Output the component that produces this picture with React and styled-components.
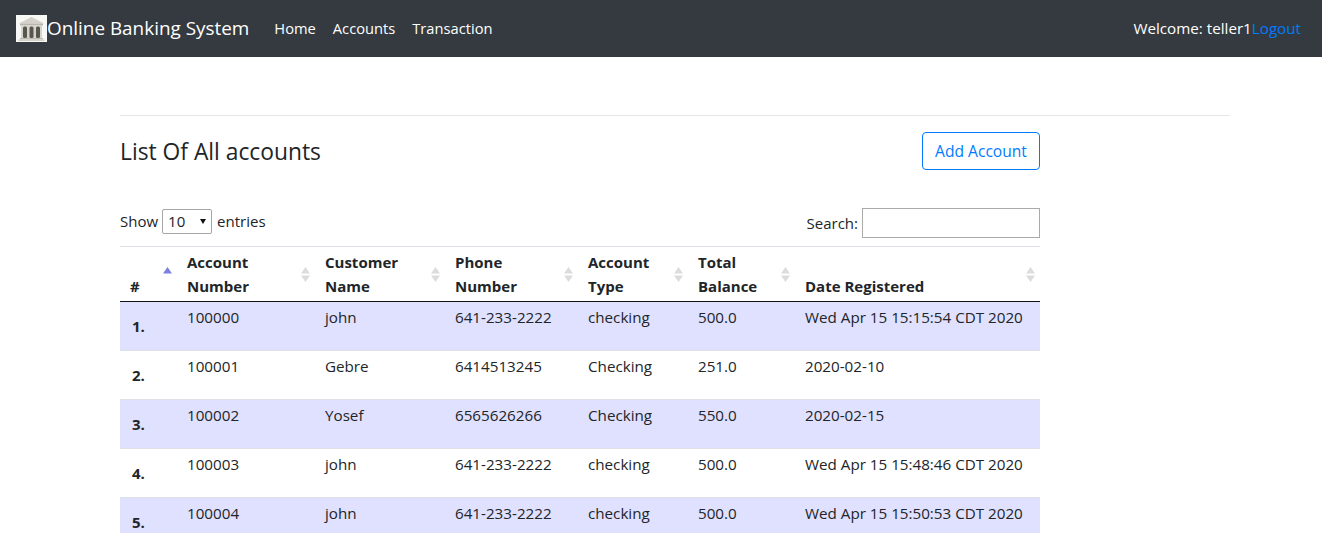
import React from 'react';
import styled, { createGlobalStyle } from 'styled-components';

const GlobalStyle = createGlobalStyle`
    html, body {
        margin: 0;
        padding: 0;
        background: #fff;
        overflow: hidden;
    }
    body {
        font-family: "Open Sans", "Noto Sans", sans-serif;
        font-size: 15px;
        line-height: 24px;
        color: #212529;
    }
`;

const Navbar = styled.nav`
    height: 57px;
    background: #343a40;
    display: flex;
    align-items: center;
    padding: 0 21px 2px 16px;
    box-sizing: border-box;
`;

const Brand = styled.div`
    display: flex;
    align-items: center;
    color: #fff;
    font-size: 18.9px;
    margin-right: 25px;
`;

const Logo = styled.svg`
    margin-top: 2px;
`;

const NavLinks = styled.div`
    display: flex;
    gap: 17px;
    flex: 1;
`;

const NavLink = styled.a`
    color: #fff;
    font-size: 14.7px;
`;

const Welcome = styled.div`
    color: #fff;
    font-size: 15.2px;
`;

const Logout = styled.a`
    color: #007bff;
`;

const Main = styled.main`
    padding: 58px 92px 0 120px;
`;

const Rule = styled.hr`
    margin: 0;
    border: 0;
    border-top: 1px solid #e6e6e6;
`;

const Content = styled.div`
    width: 920px;
`;

const TitleRow = styled.div`
    display: flex;
    justify-content: space-between;
    align-items: center;
    margin-top: 16px;
    height: 38px;
`;

const Title = styled.h4`
    margin: 2px 0 0;
    font-size: 22.8px;
    font-weight: 400;
`;

const AddButton = styled.button`
    font: inherit;
    font-size: 15.6px;
    color: #007bff;
    background: #fff;
    border: 1px solid #007bff;
    border-radius: 4px;
    height: 38px;
    width: 118px;
    padding: 0;
`;

const Controls = styled.div`
    display: flex;
    justify-content: space-between;
    margin-top: 38px;
    height: 38px;
`;

const LengthLabel = styled.label`
    display: flex;
    align-items: center;
    gap: 4px;
    height: 26px;
`;

const LengthBox = styled.div`
    width: 50px;
    height: 25px;
    box-sizing: border-box;
    border: 1px solid #a6a6a6;
    border-radius: 2px;
    display: flex;
    align-items: center;
    justify-content: space-between;
    padding: 0 5px;
    margin-right: 1px;
`;

const Caret = styled.span`
    width: 0;
    height: 0;
    border-left: 3.5px solid transparent;
    border-right: 3.5px solid transparent;
    border-top: 5px solid #111;
`;

const SearchLabel = styled.label`
    display: flex;
    align-items: center;
    gap: 4px;
    height: 30px;
`;

const SearchInput = styled.input`
    width: 178px;
    height: 30px;
    box-sizing: border-box;
    border: 1px solid #aaa;
    padding: 0;
`;

const Table = styled.table`
    width: 920px;
    table-layout: fixed;
    border-collapse: separate;
    border-spacing: 0;
    border-top: 1px solid #dee2e6;
`;

const HeadCell = styled.th`
    position: relative;
    text-align: left;
    vertical-align: bottom;
    font-weight: 700;
    padding: 3px 10px;
    border-bottom: 1px solid #111;
    width: ${(p) => p.$width}px;
    box-sizing: border-box;
`;

const SortIcon = styled.svg`
    position: absolute;
    right: 5px;
    top: 20px;
`;

const Row = styled.tr`
    background: ${(p) => (p.$odd ? '#e0e0ff' : '#fff')};
`;

const IndexCell = styled.th`
    text-align: left;
    vertical-align: top;
    font-weight: 700;
    padding: 12px;
    border-bottom: 1px solid #dee2e6;
`;

const Cell = styled.td`
    vertical-align: top;
    font-size: 15.2px;
    padding: 3px 10px 21px;
    border-bottom: 1px solid #dee2e6;
`;

const columns = [
    { label: '#', width: 57, active: true },
    { label: 'Account Number', width: 138 },
    { label: 'Customer Name', width: 130 },
    { label: 'Phone Number', width: 133 },
    { label: 'Account Type', width: 110 },
    { label: 'Total Balance', width: 107 },
    { label: 'Date Registered', width: 245 },
];

const rows = [
    ['100000', 'john', '641-233-2222', 'checking', '500.0', 'Wed Apr 15 15:15:54 CDT 2020'],
    ['100001', 'Gebre', '6414513245', 'Checking', '251.0', '2020-02-10'],
    ['100002', 'Yosef', '6565626266', 'Checking', '550.0', '2020-02-15'],
    ['100003', 'john', '641-233-2222', 'checking', '500.0', 'Wed Apr 15 15:48:46 CDT 2020'],
    ['100004', 'john', '641-233-2222', 'checking', '500.0', 'Wed Apr 15 15:50:53 CDT 2020'],
];

const BankLogo = () => (
    <Logo width="31" height="27" viewBox="0 0 31 27">
        <rect width="31" height="27" fill="#f7f7f5" />
        <path d="M3 8.5 L15.5 2 L28 8.5 Z" fill="#d3d1c8" />
        <rect x="4" y="8.5" width="23" height="2" fill="#b9b7ad" />
        <rect x="5" y="10.5" width="21" height="12.5" fill="#d6d4cb" />
        <rect x="7" y="11.5" width="4" height="11.5" rx="1.5" fill="#57564f" />
        <rect x="13.5" y="11.5" width="4" height="11.5" rx="1.5" fill="#57564f" />
        <rect x="20" y="11.5" width="4" height="11.5" rx="1.5" fill="#57564f" />
        <rect x="4" y="23" width="23" height="1.5" fill="#bdbbb1" />
        <rect x="2.5" y="24.5" width="26" height="1.5" fill="#d3d1c8" />
    </Logo>
);

const SortArrows = ({ active }) => (
    <SortIcon width="9" height="15" viewBox="0 0 9 15">
        <path d="M4.5 0 L9 6.5 L0 6.5 Z" fill={active ? '#7b80dc' : '#dcdcdc'} />
        {!active && <path d="M0 8.5 L9 8.5 L4.5 15 Z" fill="#dcdcdc" />}
    </SortIcon>
);

const App = () => (
    <>
        <GlobalStyle />
        <Navbar>
            <Brand>
                <BankLogo />
                Online Banking System
            </Brand>
            <NavLinks>
                <NavLink>Home</NavLink>
                <NavLink>Accounts</NavLink>
                <NavLink>Transaction</NavLink>
            </NavLinks>
            <Welcome>
                Welcome: teller1<Logout>Logout</Logout>
            </Welcome>
        </Navbar>
        <Main>
            <Rule />
            <Content>
                <TitleRow>
                    <Title>List Of All accounts</Title>
                    <AddButton>Add Account</AddButton>
                </TitleRow>
                <Controls>
                    <LengthLabel>
                        Show
                        <LengthBox>
                            10
                            <Caret />
                        </LengthBox>
                        entries
                    </LengthLabel>
                    <SearchLabel>
                        Search:
                        <SearchInput />
                    </SearchLabel>
                </Controls>
                <Table>
                    <thead>
                        <tr>
                            {columns.map((col) => (
                                <HeadCell key={col.label} $width={col.width}>
                                    {col.label}
                                    <SortArrows active={col.active} />
                                </HeadCell>
                            ))}
                        </tr>
                    </thead>
                    <tbody>
                        {rows.map((row, i) => (
                            <Row key={row[0]} $odd={i % 2 === 0}>
                                <IndexCell>{i + 1}.</IndexCell>
                                {row.map((value, j) => (
                                    <Cell key={j}>{value}</Cell>
                                ))}
                            </Row>
                        ))}
                    </tbody>
                </Table>
            </Content>
        </Main>
    </>
);

export default App;
